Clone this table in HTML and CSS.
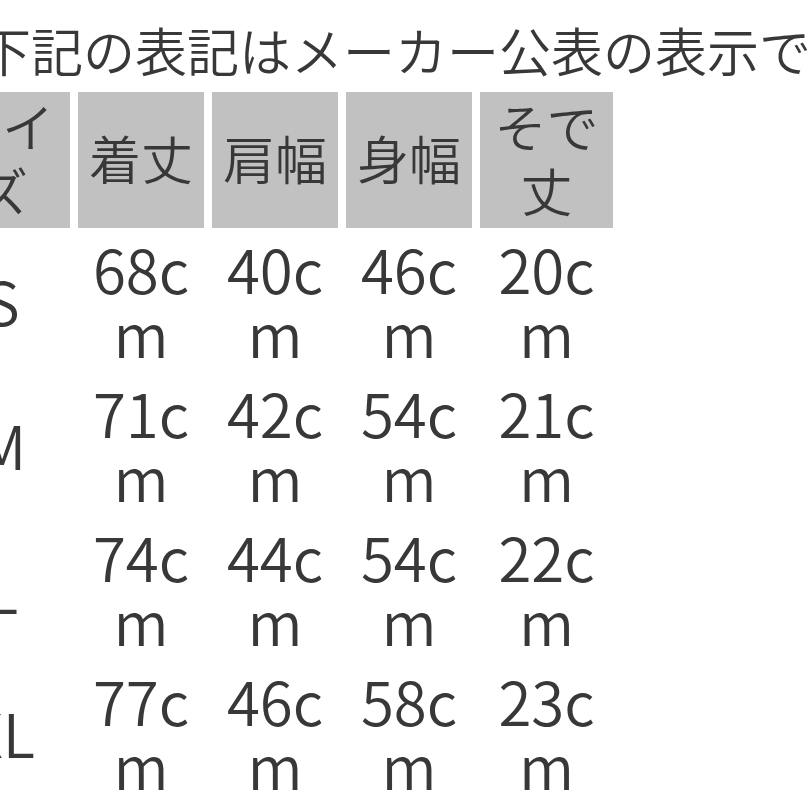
FILE: index.html
```html
<!DOCTYPE html>
<html lang="ja">
<head>
<meta charset="utf-8">
<title>サイズ表</title>
<link rel="stylesheet" href="styles.css">
</head>
<body>
<p class="note">下記の表記はメーカー公表の表示です</p>
<table class="size-table">
  <colgroup>
    <col class="c-size">
    <col class="c-std">
    <col class="c-std">
    <col class="c-std">
    <col class="c-wide">
  </colgroup>
  <thead>
    <tr>
      <th>サイズ</th>
      <th>着丈</th>
      <th>肩幅</th>
      <th>身幅</th>
      <th>そで丈</th>
    </tr>
  </thead>
  <tbody>
    <tr><td class="size">S</td><td>68cm</td><td>40cm</td><td>46cm</td><td>20cm</td></tr>
    <tr><td class="size">M</td><td>71cm</td><td>42cm</td><td>54cm</td><td>21cm</td></tr>
    <tr><td class="size">L</td><td>74cm</td><td>44cm</td><td>54cm</td><td>22cm</td></tr>
    <tr><td class="size">XL</td><td>77cm</td><td>46cm</td><td>58cm</td><td>23cm</td></tr>
  </tbody>
</table>
</body>
</html>
```
FILE: styles.css
```css
html, body {
  margin: 0;
  padding: 0;
  background: #ffffff;
  overflow: hidden;
}

body {
  width: 810px;
  height: 810px;
  color: #383838;
  font-family: "Noto Sans CJK JP", "Noto Sans", sans-serif;
  font-weight: 350;
}

.note {
  margin: 18px 0 0 -21px;
  padding-bottom: 2px;
  font-size: 52px;
  line-height: 64px;
  white-space: nowrap;
}

.size-table {
  margin-left: -74px;
  border-collapse: separate;
  border-spacing: 8px;
  table-layout: fixed;
  width: 695px;
}

.c-size { width: 136px; }
.c-std { width: 126px; }
.c-wide { width: 133px; }

.size-table th {
  background: #c1c1c1;
  font-weight: 350;
  font-size: 52px;
  line-height: 64px;
  height: 128px;
  padding: 2px 0 6px;
  text-align: center;
  vertical-align: middle;
}

.size-table td {
  font-size: 60px;
  line-height: 64px;
  height: 128px;
  padding: 0 0 8px;
  text-align: center;
  vertical-align: middle;
  word-break: break-all;
}
```
